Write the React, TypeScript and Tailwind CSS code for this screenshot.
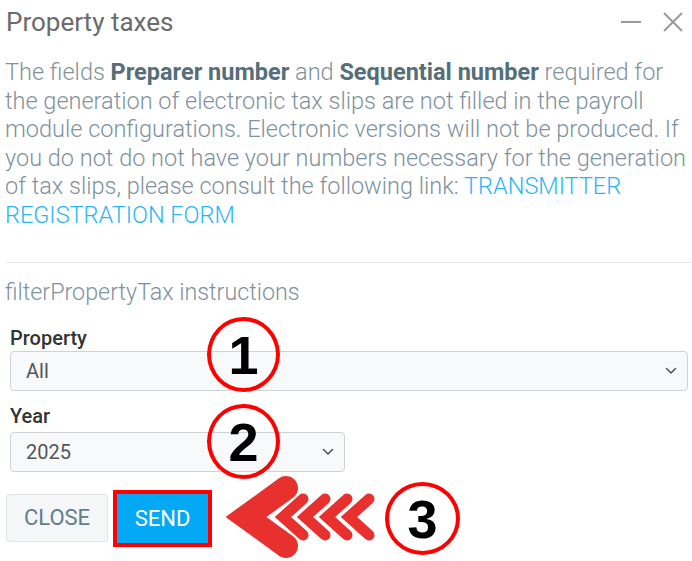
import { useState } from 'react';

// Dialog "Property taxes" with annotation marks drawn over it
const years = ['2025', '2024', '2023'];

function SelectChevron() {
  return (
    <svg width="12" height="8" viewBox="0 0 12 8" className="pointer-events-none absolute right-[11px] top-1/2 -translate-y-1/2">
      <path d="M1.5 1.5 L6 6 L10.5 1.5" fill="none" stroke="#555" strokeWidth="1.6" strokeLinecap="round" strokeLinejoin="round" />
    </svg>
  );
}

function Marker({ n, className }: { n: string; className: string }) {
  return (
    <div
      className={`absolute flex items-center justify-center rounded-[50%] border-[4px] border-[#ff0000] bg-transparent font-['Liberation_Sans',Arial,sans-serif] text-[54px] font-bold leading-none text-black ${className}`}
    >
      {n}
    </div>
  );
}

function Arrow() {
  const small = [0, 22, 44, 66];
  return (
    <svg className="absolute left-[210px] top-[470px]" width="180" height="91" viewBox="210 470 180 91">
      <polyline
        points="286,488 246,517 286,546"
        fill="none"
        stroke="#e8302f"
        strokeWidth="24"
        strokeLinecap="round"
        strokeLinejoin="miter"
        strokeMiterlimit="6"
      />
      <g style={{ filter: 'blur(0.7px)' }}>
        {small.map(dx => (
          <polyline
            key={dx}
            points={`${303 + dx},499 ${283 + dx},517 ${303 + dx},535`}
            fill="none"
            stroke="#e8302f"
            strokeWidth="11"
            strokeLinecap="round"
            strokeLinejoin="miter"
            strokeMiterlimit="6"
          />
        ))}
      </g>
    </svg>
  );
}

export default function App() {
  const [property, setProperty] = useState('All');
  const [year, setYear] = useState('2025');

  return (
    <div className="relative h-[561px] w-[692px] overflow-hidden bg-white font-['Roboto','Noto_Sans',sans-serif]">
      {/* Header */}
      <div className="flex h-[44px] items-center justify-between pl-[6px] pr-[8px]">
        <h1 className="text-[26px] font-normal text-[#6b6b6b]">Property taxes</h1>
        <div className="flex items-center gap-[20px]">
          <button className="flex h-[22px] w-[22px] items-center justify-center">
            <svg width="22" height="22" viewBox="0 0 22 22">
              <path d="M1 11 H21" stroke="#9a9a9a" strokeWidth="2" />
            </svg>
          </button>
          <button className="flex h-[22px] w-[22px] items-center justify-center">
            <svg width="22" height="22" viewBox="0 0 22 22">
              <path d="M2 2 L20 20 M20 2 L2 20" stroke="#9a9a9a" strokeWidth="2" />
            </svg>
          </button>
        </div>
      </div>

      {/* Warning */}
      <p className="mt-[14px] w-[690px] pl-[5px] font-['Roboto_Light','Roboto',sans-serif] text-[23.5px] font-light leading-[28.6px] text-[#7f939d]">
        The fields <b className="font-['Roboto'] font-bold text-[#546e7a]">Preparer number</b> and{' '}
        <b className="font-['Roboto'] font-bold text-[#546e7a]">Sequential number</b> required for the generation of
        electronic tax slips are not filled in the payroll module configurations. Electronic versions will not be
        produced. If you do not do not have your numbers necessary for the generation of tax slips, please consult the
        following link:{' '}
        <a href="#" className="text-[#29b6f6]">
          TRANSMITTER REGISTRATION FORM
        </a>
      </p>

      <div className="ml-[5px] mt-[32px] h-px bg-[#ebebeb]" />

      {/* Form */}
      <div className="mt-[15px] pl-[5px] font-['Roboto_Light','Roboto',sans-serif] text-[23.3px] font-light leading-[28px] text-[#7f939d]">
        filterPropertyTax instructions
      </div>

      <div className="pl-[10px]">
        <label className="mt-[20px] block text-[20px] font-medium leading-[24px] text-[#333]">Property</label>
        <div className="relative mt-px w-[678px]">
          <select
            value={property}
            onChange={e => setProperty(e.target.value)}
            className="h-[40px] w-full appearance-none rounded-[4px] border border-[#cfd2d6] bg-[#f8f9fa] pl-[15px] text-[20px] text-[#555] outline-none"
          >
            <option>All</option>
          </select>
          <SelectChevron />
        </div>

        <label className="mt-[13px] block text-[20px] font-medium leading-[24px] text-[#333]">Year</label>
        <div className="relative mt-[4px] w-[335px]">
          <select
            value={year}
            onChange={e => setYear(e.target.value)}
            className="h-[40px] w-full appearance-none rounded-[4px] border border-[#cfd2d6] bg-[#f8f9fa] pl-[15px] text-[20px] text-[#555] outline-none"
          >
            {years.map(y => (
              <option key={y}>{y}</option>
            ))}
          </select>
          <SelectChevron />
        </div>
      </div>

      <div className="mt-[22px] flex gap-[9px] pl-[6px]">
        <button className="h-[48px] w-[102px] rounded-[3px] border border-[#e1e4e7] bg-[#f5f6f7] text-[22px] text-[#607d8b]">
          CLOSE
        </button>
        <button className="h-[49px] w-[91px] bg-[#03a9f4] text-[22px] text-white outline-[4px] outline-[#ff0000] outline-solid">
          SEND
        </button>
      </div>

      {/* Annotations */}
      <Marker n="1" className="left-[207px] top-[317px] h-[75px] w-[73px]" />
      <Marker n="2" className="left-[207px] top-[404px] h-[75px] w-[73px]" />
      <Marker n="3" className="left-[385px] top-[482px] h-[73px] w-[75px]" />
      <Arrow />
    </div>
  );
}
